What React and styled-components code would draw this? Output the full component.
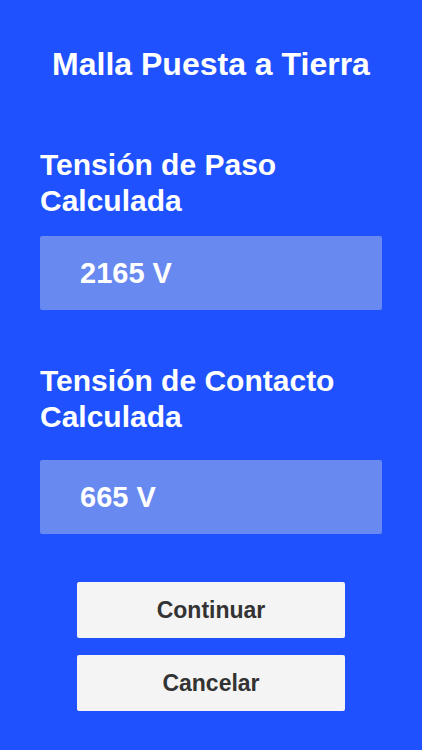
import React from 'react';
import styled, { createGlobalStyle } from 'styled-components';

const GlobalStyle = createGlobalStyle`
  html, body {
    margin: 0;
    padding: 0;
    background: #1f52fe;
  }
  body {
    font-family: "Liberation Sans", Arial, sans-serif;
  }
`;

const Screen = styled.div`
  width: 422px;
  height: 750px;
  background: #1f52fe;
  display: flex;
  flex-direction: column;
  box-sizing: border-box;
  padding: 44px 40px 0 40px;
  overflow: hidden;
`;

const Title = styled.h1`
  margin: 0;
  font-size: 32px;
  font-weight: 700;
  color: #fff;
  text-align: center;
  line-height: 40px;
  white-space: nowrap;
`;

const Section = styled.section`
  display: flex;
  flex-direction: column;
  margin-top: ${(p) => p.top}px;
`;

const Label = styled.h2`
  margin: 0;
  font-size: 30px;
  font-weight: 700;
  color: #fff;
  line-height: 36px;
`;

const ValueBox = styled.div`
  margin-top: ${(p) => p.gap}px;
  height: 74px;
  width: 342px;
  background: #6889ef;
  border-radius: 2px;
  display: flex;
  align-items: center;
  padding-left: 40px;
  box-sizing: border-box;
  font-size: 29px;
  font-weight: 700;
  color: #fff;
`;

const Buttons = styled.div`
  display: flex;
  flex-direction: column;
  align-items: center;
  gap: 17px;
  margin-top: 48px;
`;

const Button = styled.button`
  width: 268px;
  height: 56px;
  background: #f4f4f4;
  border: none;
  border-radius: 2px;
  padding: 0;
  font-family: "Liberation Sans", Arial, sans-serif;
  font-size: 23px;
  font-weight: 700;
  color: #333;
  cursor: pointer;
`;

const App = () => {
  return (
    <>
      <GlobalStyle />
      <Screen>
        <Title>Malla Puesta a Tierra</Title>
        <Section top={63}>
          <Label>
            Tensión de Paso
            <br />
            Calculada
          </Label>
          <ValueBox gap={17}>2165 V</ValueBox>
        </Section>
        <Section top={53}>
          <Label>
            Tensión de Contacto
            <br />
            Calculada
          </Label>
          <ValueBox gap={25}>665 V</ValueBox>
        </Section>
        <Buttons>
          <Button>Continuar</Button>
          <Button>Cancelar</Button>
        </Buttons>
      </Screen>
    </>
  );
};

export default App;
